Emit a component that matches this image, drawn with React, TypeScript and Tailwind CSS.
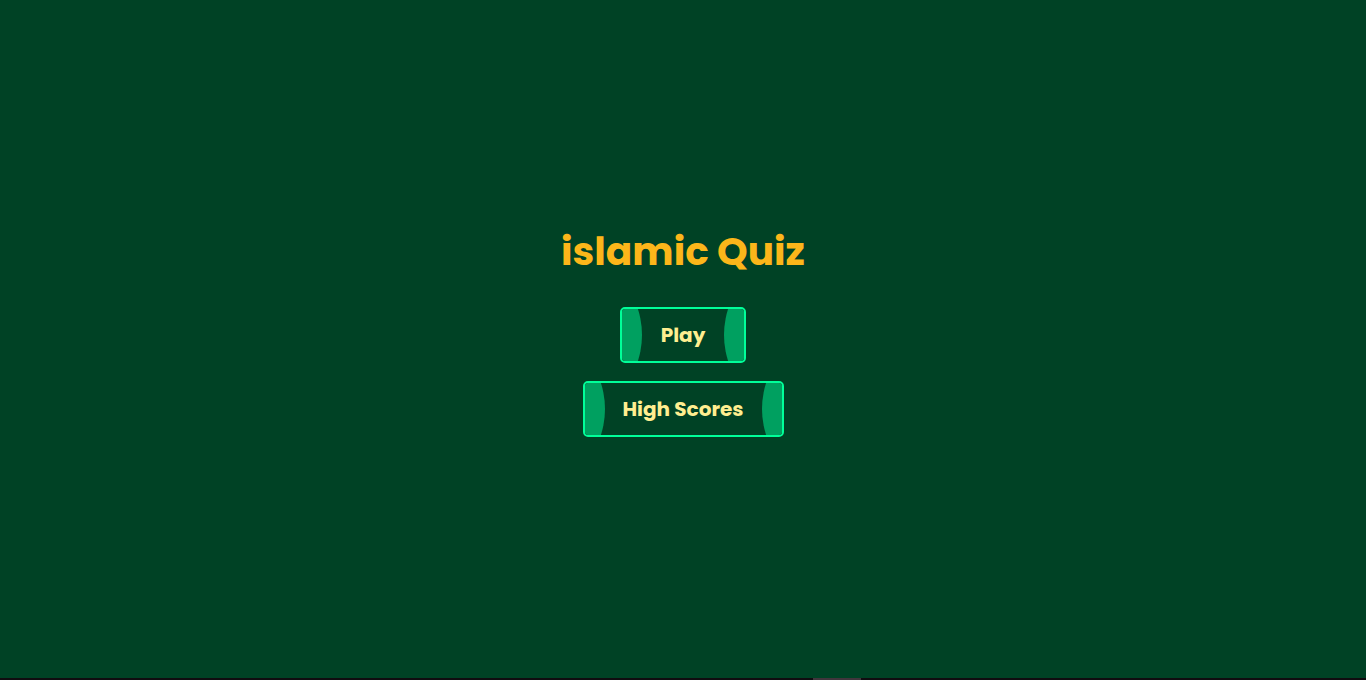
type MenuButtonProps = { label: string };

function MenuButton({ label }: MenuButtonProps) {
  return (
    <button
      type="button"
      className="relative flex h-14 min-w-[126px] cursor-pointer items-center justify-center overflow-hidden rounded-[5px] border-2 border-[#00ff99] px-[38px] text-xl font-bold text-[#ffee90]"
    >
      <span className="absolute top-1/2 right-full -mr-5 size-[170px] -translate-y-1/2 rounded-full bg-[#00a060]" />
      <span className="absolute top-1/2 left-full -ml-5 size-[170px] -translate-y-1/2 rounded-full bg-[#00a060]" />
      <span className="relative">{label}</span>
    </button>
  );
}

export default function App() {
  return (
    <div className="flex min-h-screen flex-col bg-[#004225] font-['Poppins','Inter',sans-serif]">
      <main className="flex flex-1 flex-col items-center justify-center pb-[19px]">
        <h1 className="mb-[25px] text-[39px] leading-[60px] font-bold text-[#fcb61a]">islamic Quiz</h1>
        <nav className="flex flex-col items-center gap-[18px]">
          <MenuButton label="Play" />
          <MenuButton label="High Scores" />
        </nav>
      </main>
      <footer className="flex h-0.5 justify-center bg-[#100c10] pl-[308px]">
        <div className="h-0.5 w-12 bg-[#40363c]" />
      </footer>
    </div>
  );
}
